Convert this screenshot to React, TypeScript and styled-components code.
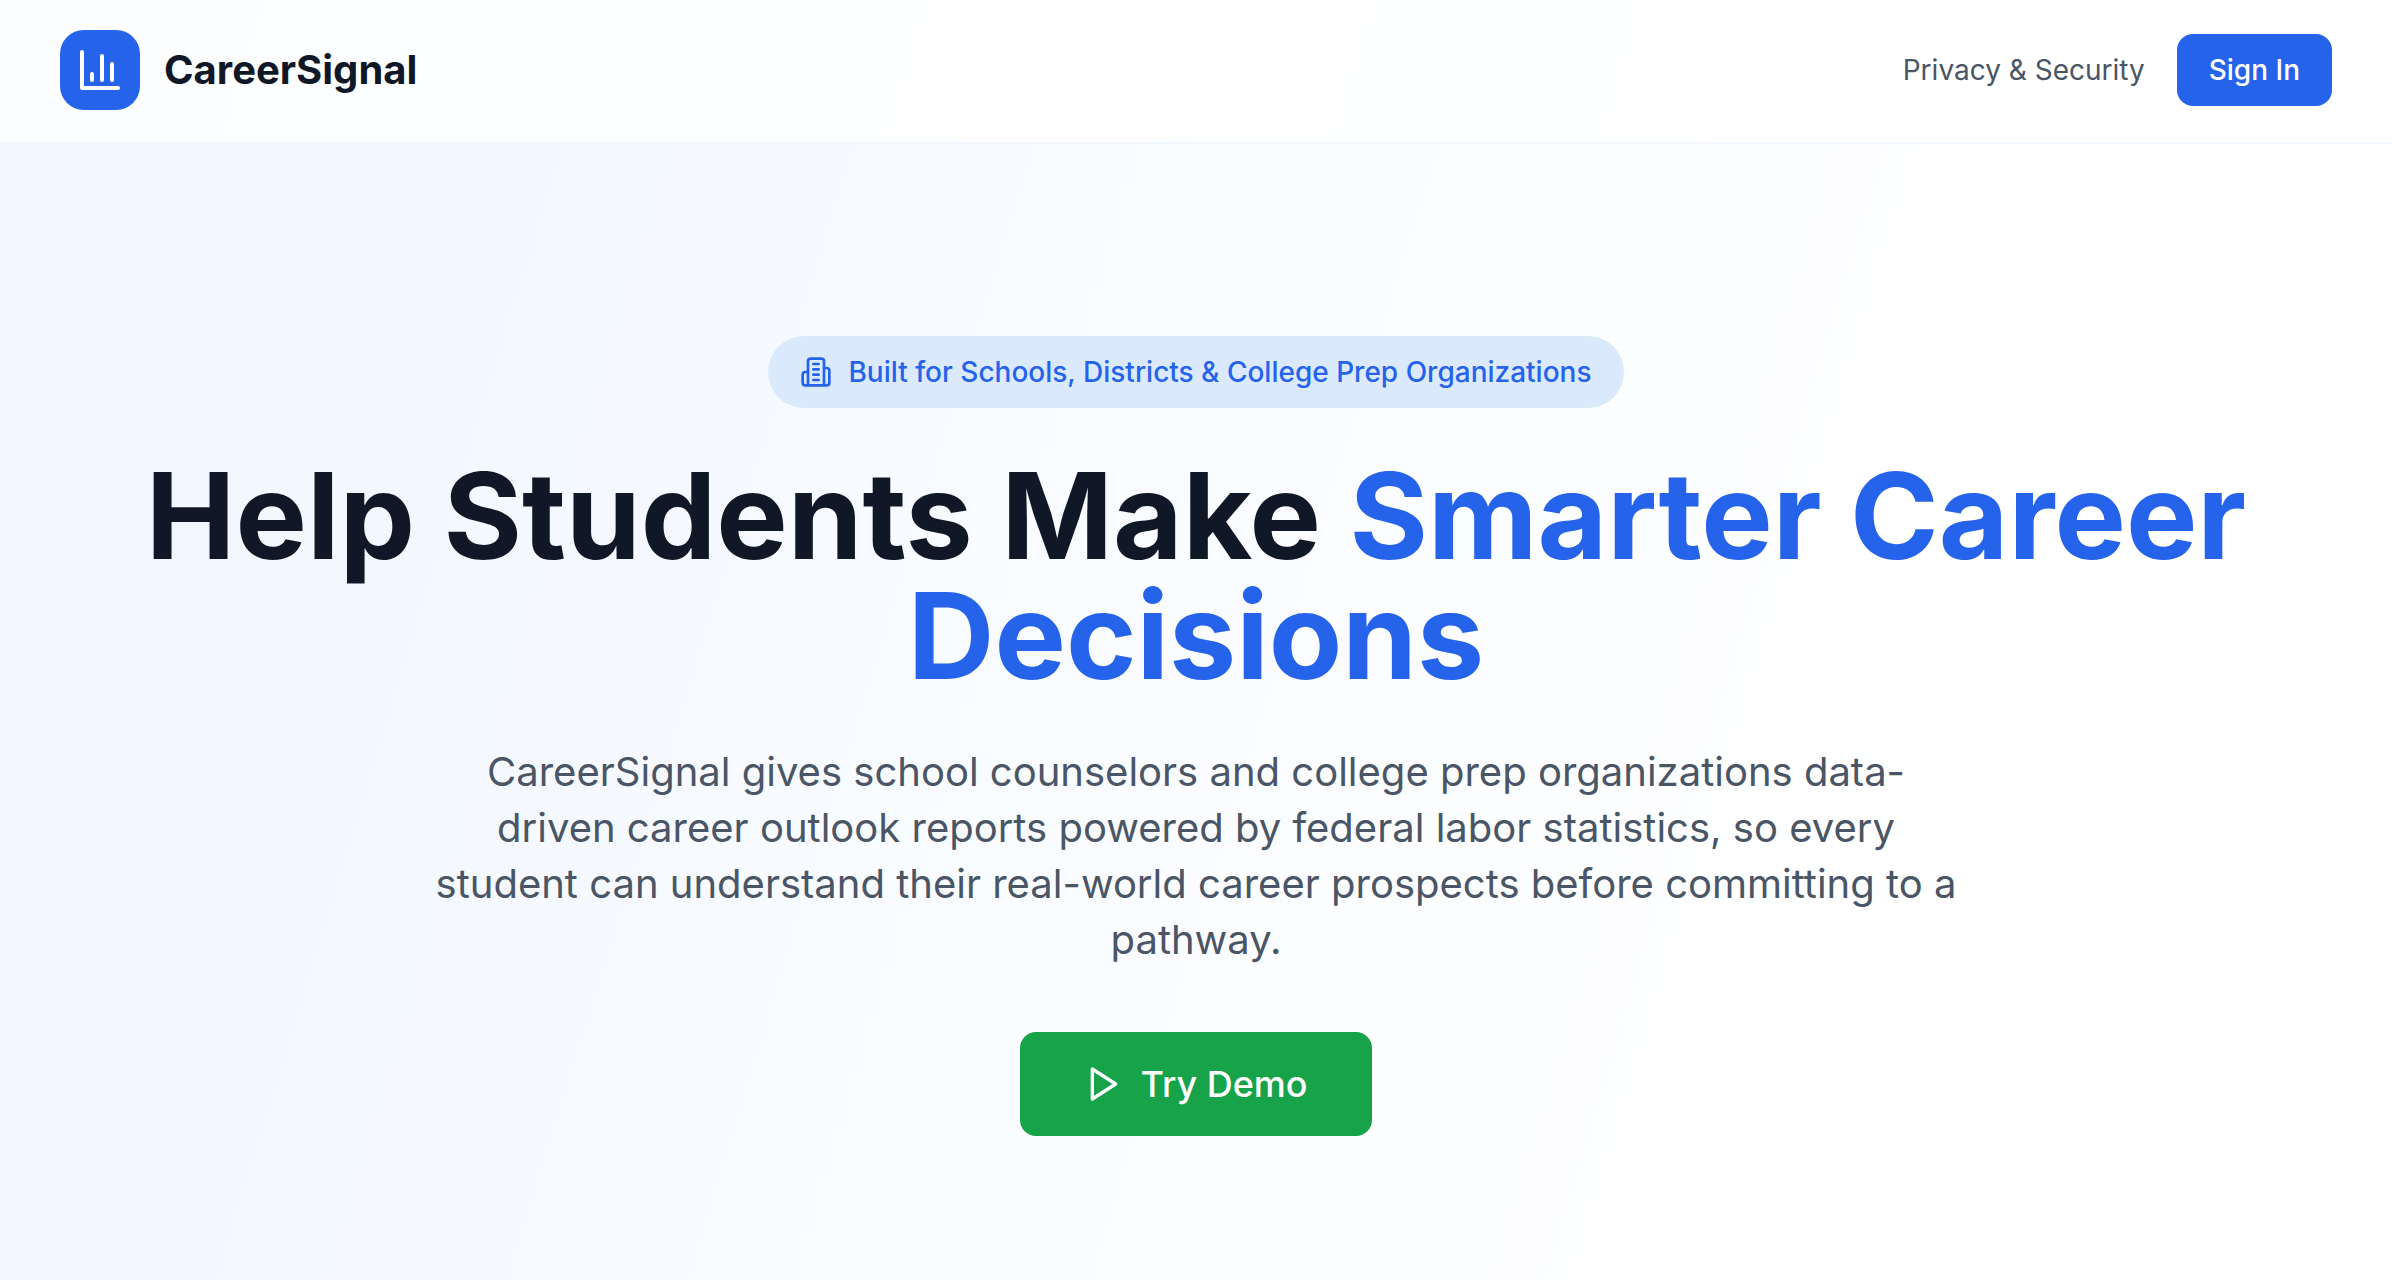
import React from "react";
import styled, { createGlobalStyle } from "styled-components";

const GlobalStyle = createGlobalStyle`
  *, *::before, *::after { box-sizing: border-box; }
  body {
    margin: 0;
    background: #ffffff;
    font-family: Inter, "Liberation Sans", sans-serif;
    color: #101828;
  }
`;

const Page = styled.div`
  min-height: 100vh;
  display: flex;
  flex-direction: column;
  background: linear-gradient(107deg, #f1f6ff 0%, #f3f8ff 20%, #f8fbff 40%, #ffffff 80%);
`;

const Header = styled.header`
  display: flex;
  align-items: center;
  justify-content: space-between;
  padding: 30px 60px 32px;
  background: rgba(255, 255, 255, 0.8);
  border-bottom: 2px solid #f1f6ff;
`;

const Brand = styled.a`
  display: flex;
  align-items: center;
  gap: 24px;
  color: #101828;
  font-size: 40px;
  line-height: 56px;
  font-weight: 700;
  text-decoration: none;
`;

const BrandMark = styled.span`
  display: flex;
  align-items: center;
  justify-content: center;
  width: 80px;
  height: 80px;
  border-radius: 24px;
  background: #2563eb;
  color: #ffffff;
`;

const Nav = styled.nav`
  display: flex;
  align-items: center;
  gap: 32px;
`;

const NavLink = styled.a`
  color: #4a5565;
  font-size: 28px;
  line-height: 40px;
  text-decoration: none;
`;

const Button = styled.button<{ $large?: boolean }>`
  display: inline-flex;
  align-items: center;
  justify-content: center;
  gap: 16px;
  border: 0;
  border-radius: 16px;
  cursor: pointer;
  font-family: inherit;
  font-weight: 500;
  color: #ffffff;
  background: ${(p) => (p.$large ? "#16a34a" : "#2563eb")};
  padding: ${(p) => (p.$large ? "24px 64px" : "16px 32px")};
  font-size: ${(p) => (p.$large ? "36px" : "28px")};
  line-height: ${(p) => (p.$large ? "56px" : "40px")};
`;

const Hero = styled.main`
  flex: 1;
  display: flex;
  flex-direction: column;
  align-items: center;
  padding: 192px 60px 144px;
  text-align: center;
`;

const Badge = styled.div`
  display: inline-flex;
  align-items: center;
  gap: 16px;
  padding: 16px 32px;
  border-radius: 36px;
  background: #dbe9fd;
  color: #2563eb;
  font-size: 28px;
  line-height: 40px;
  font-weight: 500;
`;

const Title = styled.h1`
  margin: 48px 0 0;
  font-size: 120px;
  line-height: 120px;
  font-weight: 700;
`;

const Accent = styled.span`
  color: #2563eb;
`;

const Lead = styled.p`
  max-width: 1536px;
  margin: 48px 0 64px;
  color: #4a5565;
  font-size: 40px;
  line-height: 56px;
`;

const Icon = ({ size, children }: { size: number; children: React.ReactNode }) => (
  <svg
    width={size}
    height={size}
    viewBox="0 0 24 24"
    fill="none"
    stroke="currentColor"
    strokeWidth={2}
    strokeLinecap="round"
    strokeLinejoin="round"
    aria-hidden="true"
  >
    {children}
  </svg>
);

export default function App() {
  return (
    <Page>
      <GlobalStyle />
      <Header>
        <Brand href="#">
          <BrandMark>
            <Icon size={48}>
              <path d="M3 3v18h18" />
              <path d="M18 17V9" />
              <path d="M13 17V5" />
              <path d="M8 17v-3" />
            </Icon>
          </BrandMark>
          CareerSignal
        </Brand>
        <Nav>
          <NavLink href="#privacy">Privacy &amp; Security</NavLink>
          <Button type="button">Sign In</Button>
        </Nav>
      </Header>
      <Hero>
        <Badge>
          <Icon size={32}>
            <path d="M6 22V4a2 2 0 0 1 2-2h8a2 2 0 0 1 2 2v18Z" />
            <path d="M6 12H4a2 2 0 0 0-2 2v6a2 2 0 0 0 2 2h2" />
            <path d="M18 9h2a2 2 0 0 1 2 2v9a2 2 0 0 1-2 2h-2" />
            <path d="M10 6h4" />
            <path d="M10 10h4" />
            <path d="M10 14h4" />
            <path d="M10 18h4" />
          </Icon>
          Built for Schools, Districts &amp; College Prep Organizations
        </Badge>
        <Title>
          Help Students Make <Accent>Smarter Career Decisions</Accent>
        </Title>
        <Lead>
          CareerSignal gives school counselors and college prep organizations data-driven career
          outlook reports powered by federal labor statistics, so every student can understand their
          real-world career prospects before committing to a pathway.
        </Lead>
        <Button type="button" $large>
          <Icon size={40}>
            <polygon points="5 3 19 12 5 21 5 3" />
          </Icon>
          Try Demo
        </Button>
      </Hero>
    </Page>
  );
}
